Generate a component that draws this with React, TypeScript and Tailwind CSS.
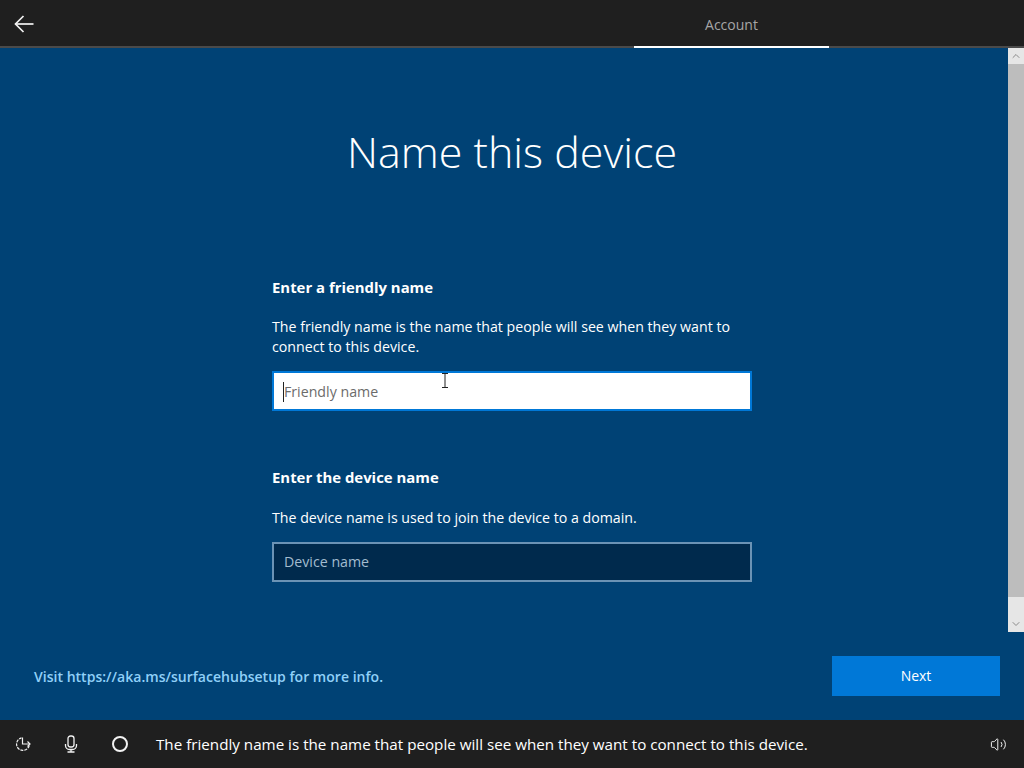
import { ChevronDown, ChevronUp, Volume2 } from 'lucide-react';

const font = { fontFamily: '"Open Sans", sans-serif' };

function BackIcon() {
  return (
    <svg width="20" height="18" viewBox="0 0 20 18" fill="none" stroke="#f2f2f2" strokeWidth="1.7">
      <path d="M1.5 9H19.5" />
      <path d="M9.5 1L1.5 9L9.5 17" />
    </svg>
  );
}

function UpdateIcon() {
  return (
    <svg width="18" height="18" viewBox="0 0 18 18" fill="none" stroke="#f2f2f2" strokeWidth="1.2">
      <path d="M15.2 10.5A6.4 6.4 0 1 1 7.5 2.8" strokeDasharray="3 1" />
      <path d="M8.5 2.5V9H16" />
      <path d="M13.5 6.5L16 9L13.5 11.5" />
    </svg>
  );
}

function MicIcon() {
  return (
    <svg width="14" height="18" viewBox="0 0 14 18" fill="none" stroke="#f2f2f2" strokeWidth="1.3">
      <rect x="4" y="1" width="6" height="11" rx="2.5" />
      <path d="M1.5 9V10.5A4 4 0 0 0 5.5 14.5H8.5A4 4 0 0 0 12.5 10.5V9" />
      <path d="M7 14.5V17M3.5 17H10.5" />
    </svg>
  );
}

function BeamCursor() {
  return (
    <svg width="8" height="15" viewBox="0 0 8 15" fill="none" stroke="#222222" strokeWidth="1">
      <path d="M1 .5H7M4 .5V14.5M1 14.5H7" />
    </svg>
  );
}

export default function App() {
  return (
    <div className="w-[1024px] h-[768px] flex flex-col overflow-hidden bg-[#004275]" style={font}>
      {/* Barra superior */}
      <div className="h-[48px] flex items-stretch justify-between bg-[#1f1f1f] border-b-2 border-[#4a4a4a]">
        <div className="w-[48px] flex items-center justify-center pt-[2px]">
          <BackIcon />
        </div>
        <div className="w-[195px] mr-[195px] -mb-[2px] pt-[2px] flex items-center justify-center border-b-2 border-white text-[14px] text-[#a6a6a6]">
          Account
        </div>
      </div>

      {/* Contenido */}
      <div className="h-[584px] flex">
        <div className="flex-1 flex flex-col items-center pl-[16px]">
          <h1 className="mt-[69px] text-[43px] leading-[70px] font-light text-white">Name this device</h1>
          <div className="mt-[90px] w-[480px] text-white">
            <h2 className="text-[14.9px] leading-[20px] font-bold">Enter a friendly name</h2>
            <p className="mt-[20px] text-[14.2px] leading-[20px]">
              The friendly name is the name that people will see when they want to connect to this device.
            </p>
            <div className="relative mt-[14px] h-[40px] flex items-center pl-[9px] pr-[10px] pt-[1px] bg-white border-2 border-[#0078d7] text-[14.2px] text-[#6b6b6b]">
              <span className="border-l border-[#222222] leading-[20px]">Friendly name</span>
              <span className="absolute left-[167px] top-[0px]"><BeamCursor /></span>
            </div>
            <h2 className="mt-[56px] text-[14.9px] leading-[20px] font-bold">Enter the device name</h2>
            <p className="mt-[21px] text-[14.2px] leading-[20px]">The device name is used to join the device to a domain.</p>
            <div className="mt-[14px] h-[40px] flex items-center px-[10px] pb-[1px] bg-[#002a4d] border-2 border-[#6b93b5] text-[14.2px] text-[#a3bccf]">
              Device name
            </div>
          </div>
        </div>

        {/* Scrollbar */}
        <div className="w-[16px] flex flex-col bg-[#e6e6e6]">
          <div className="h-[16px] flex items-center justify-center">
            <ChevronUp className="w-[12px] h-[12px] text-[#8a8a8a]" />
          </div>
          <div className="h-[533px] bg-[#bdbdbd]" />
          <div className="flex-1 flex items-end justify-center pb-[2px]">
            <ChevronDown className="w-[12px] h-[12px] text-[#8a8a8a]" />
          </div>
        </div>
      </div>

      {/* Pie */}
      <div className="h-[88px] flex items-start justify-between pl-[34px] pr-[24px] pt-[24px]">
        <a className="mt-[11px] text-[14.05px] leading-[20px] font-semibold text-[#90d0f8]">
          Visit https://aka.ms/surfacehubsetup for more info.
        </a>
        <button className="w-[168px] h-[40px] pb-[1px] bg-[#0078d7] text-white text-[14px]">Next</button>
      </div>

      {/* Barra inferior */}
      <div className="h-[48px] flex items-center bg-[#1f1f1f] text-white">
        <div className="w-[46px] flex justify-center"><UpdateIcon /></div>
        <div className="w-[50px] flex justify-center"><MicIcon /></div>
        <div className="w-[48px] flex justify-center">
          <div className="w-[16px] h-[16px] rounded-full border-2 border-[#f2f2f2]" />
        </div>
        <p className="ml-[12px] flex-1 text-[15.2px]">
          The friendly name is the name that people will see when they want to connect to this device.
        </p>
        <div className="w-[52px] flex justify-center">
          <Volume2 className="w-[17px] h-[17px] text-[#f2f2f2]" strokeWidth={1.4} />
        </div>
      </div>
    </div>
  );
}
